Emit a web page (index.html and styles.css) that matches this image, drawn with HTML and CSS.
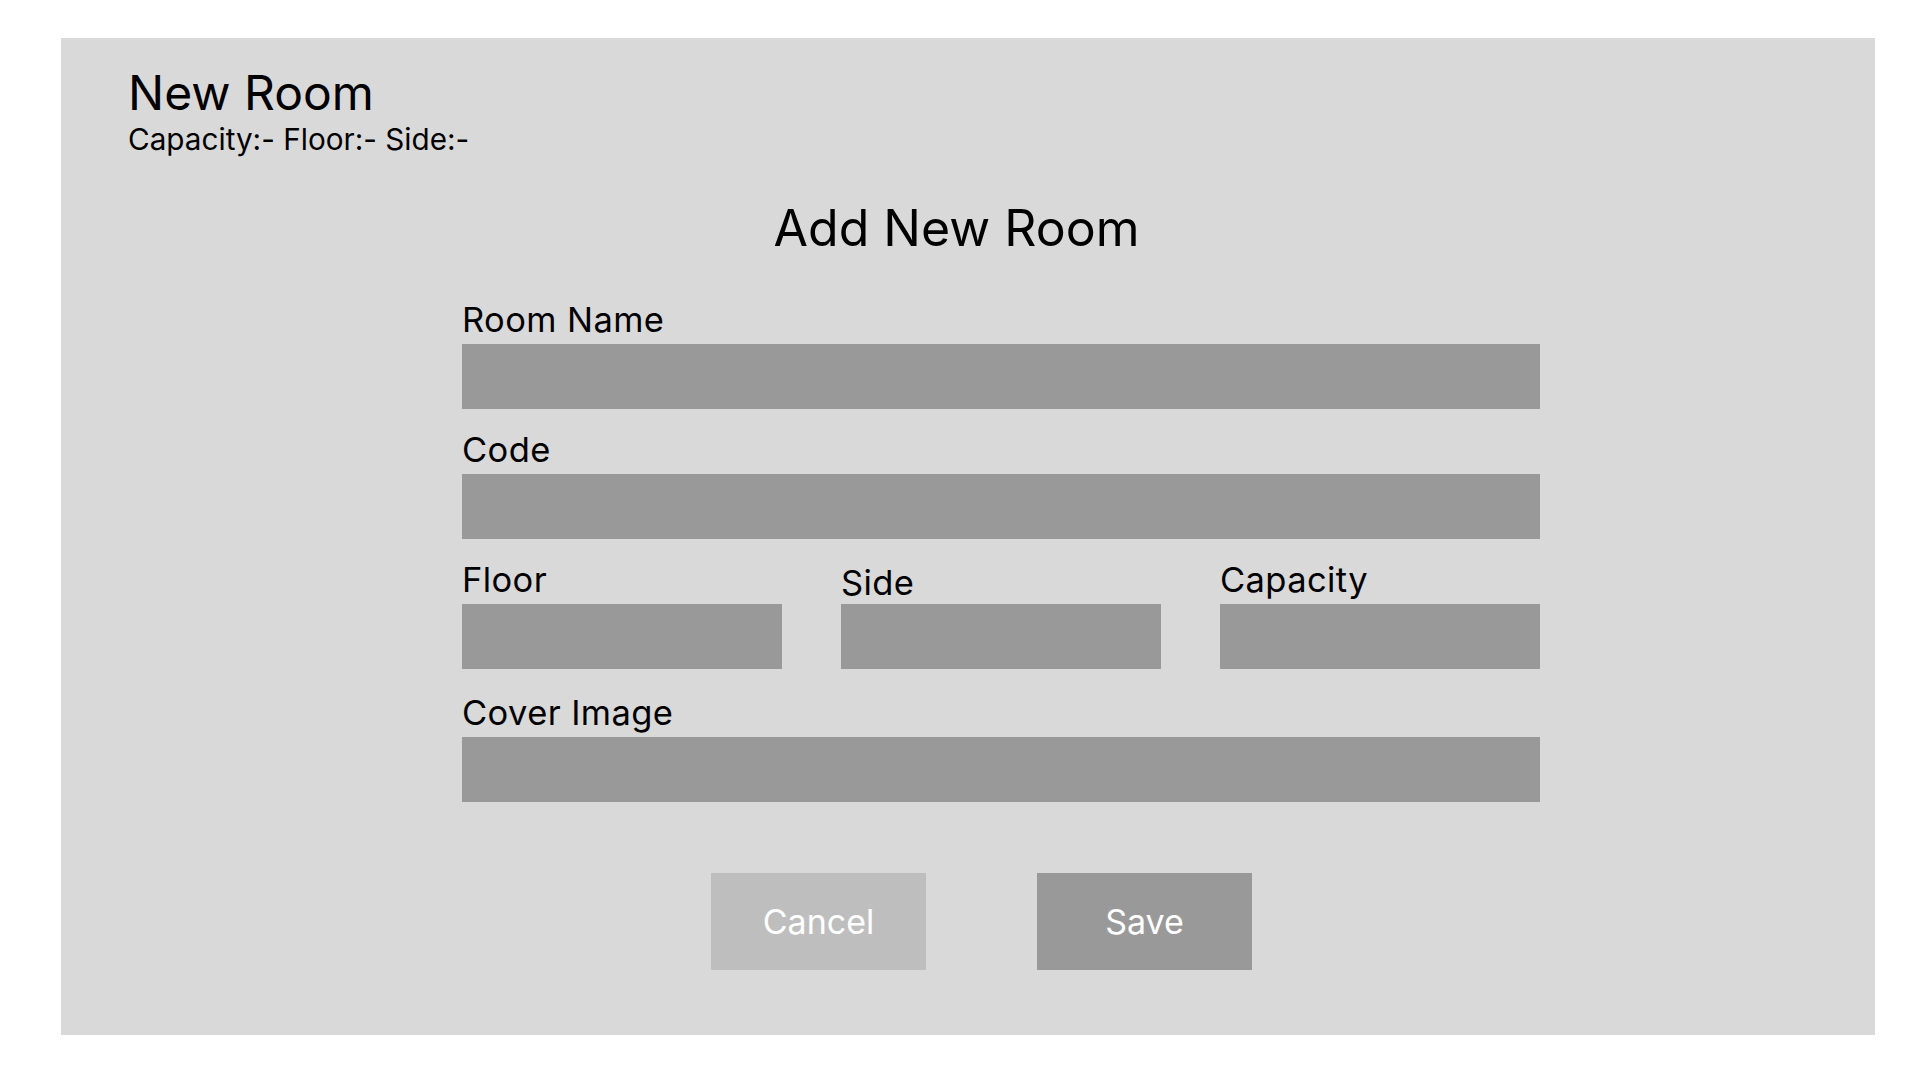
FILE: index.html
```html
<!DOCTYPE html>
<html lang="en">
<head>
<meta charset="utf-8">
<title>New Room</title>
<link rel="stylesheet" href="styles.css">
</head>
<body>
<main class="panel">
  <header class="header">
    <h1 class="room-title">New Room</h1>
    <p class="room-meta">Capacity:- Floor:- Side:-</p>
  </header>
  <h2 class="form-title">Add New Room</h2>
  <form class="form">
    <div class="group">
      <label class="label">Room Name</label>
      <div class="field"></div>
    </div>
    <div class="group">
      <label class="label">Code</label>
      <div class="field"></div>
    </div>
    <div class="row">
      <div class="cell">
        <label class="label">Floor</label>
        <div class="field"></div>
      </div>
      <div class="cell">
        <label class="label label-side">Side</label>
        <div class="field"></div>
      </div>
      <div class="cell">
        <label class="label">Capacity</label>
        <div class="field"></div>
      </div>
    </div>
    <div class="group group-cover">
      <label class="label">Cover Image</label>
      <div class="field"></div>
    </div>
  </form>
  <div class="actions">
    <button type="button" class="btn btn-cancel">Cancel</button>
    <button type="button" class="btn btn-save">Save</button>
  </div>
</main>
</body>
</html>
```
FILE: styles.css
```css
* { box-sizing: border-box; }
html, body {
  margin: 0;
  padding: 0;
  background: #ffffff;
}
body {
  font-family: Inter, "Noto Sans", "Liberation Sans", sans-serif;
  color: #000;
}
.panel {
  margin: 38px 0 0 61px;
  width: 1814px;
  height: 997px;
  background: #d9d9d9;
  padding-top: 26px;
}
.header {
  padding-left: 67px;
}
.room-title {
  margin: 0;
  font-size: 48px;
  line-height: 57.6px;
  font-weight: 400;
}
.room-meta {
  margin: 0;
  font-size: 29.7px;
  line-height: 34.8px;
}
.form-title {
  margin: 42px 0 0 0;
  font-size: 50px;
  line-height: 60px;
  font-weight: 400;
  text-align: center;
  padding-right: 23px;
}
.form {
  margin: 42.6px 0 0 401px;
  width: 1078px;
}
.group + .group,
.group + .row,
.row + .group {
  margin-top: 22px;
}
.group-cover.group-cover { margin-top: 25px; }
.label {
  display: block;
  font-size: 34.5px;
  letter-spacing: 0.4px;
  line-height: 38.4px;
  margin-bottom: 4.7px;
}
.label-side {
  line-height: 33.8px;
}
.field {
  height: 65px;
  background: #999999;
}
.row {
  display: grid;
  grid-template-columns: repeat(3, 320px);
  justify-content: space-between;
  align-items: end;
}
.actions {
  display: flex;
  gap: 111px;
  margin: 71px 0 0 650px;
}
.btn {
  width: 215px;
  height: 97px;
  border: 0;
  padding: 0;
  font-family: Inter, "Noto Sans", "Liberation Sans", sans-serif;
  font-size: 34px;
  color: #ffffff;
  cursor: pointer;
}
.btn-cancel { background: #bfbebe; }
.btn-save { background: #999999; }
```
